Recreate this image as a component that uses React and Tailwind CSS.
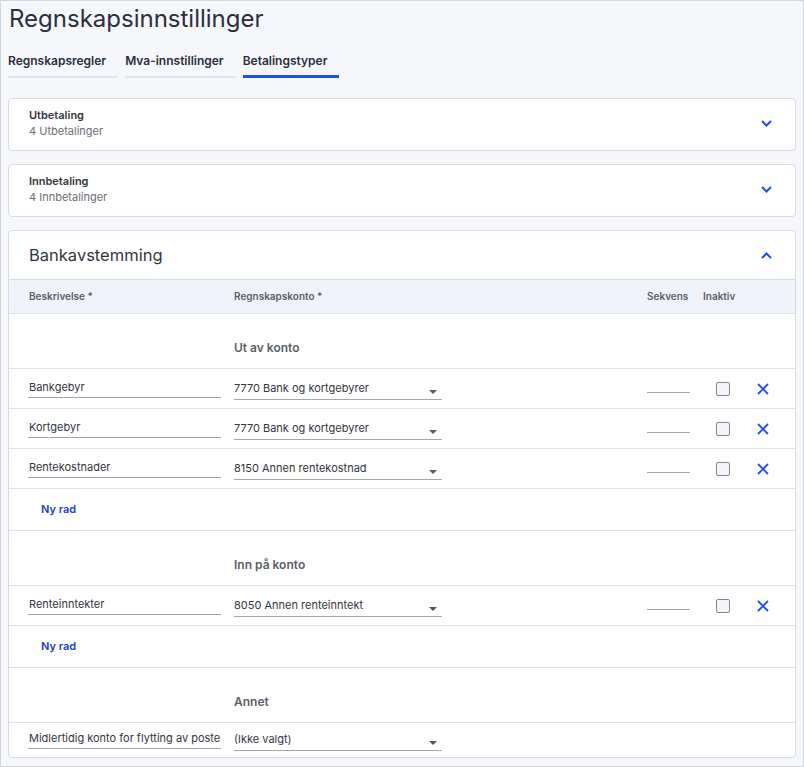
import { useState } from "react";

const blue = "#1d4ef0";

function Chevron({ up }) {
  return (
    <svg width="11" height="7" viewBox="0 0 11 7" fill="none">
      <path
        d={up ? "M1 6L5.5 1.5L10 6" : "M1 1L5.5 5.5L10 1"}
        stroke={blue}
        strokeWidth="2"
      />
    </svg>
  );
}

function CloseIcon() {
  return (
    <svg width="12" height="12" viewBox="0 0 12 12" fill="none">
      <path d="M1 1L11 11M11 1L1 11" stroke={blue} strokeWidth="1.8" />
    </svg>
  );
}

function SummaryCard({ title, subtitle }) {
  return (
    <div className="flex items-center justify-between rounded-[4px] border border-[#d7dae0] bg-white pl-[20px] pr-[23px] pt-2 pb-[11px]">
      <div className="text-[11px] leading-[16px]">
        <div className="font-semibold text-[#333640]">{title}</div>
        <div className="text-[#6b6e75]">{subtitle}</div>
      </div>
      <Chevron />
    </div>
  );
}

function TextInput({ value }) {
  return (
    <div className="-ml-px w-[193px] overflow-hidden whitespace-nowrap border-b border-[#a3a5a9] pl-px pb-[3px] text-[11px] leading-[14px] text-[#333640]">
      {value}
    </div>
  );
}

function SelectInput({ value }) {
  return (
    <div className="mt-[3px] flex w-[208px] items-end justify-between border-b border-[#a3a5a9] pb-[4px] text-[11px] leading-[14px] text-[#333640]">
      <span>{value}</span>
      <span className="mr-[5px] mb-px h-0 w-0 border-x-[4px] border-t-[4px] border-x-transparent border-t-[#555862]" />
    </div>
  );
}

function DataRow({ desc, account, last }) {
  const [checked, setChecked] = useState(false);
  const empty = account.startsWith("(");
  return (
    <div
      className={`grid grid-cols-[205px_413px_56px_40px_40px] items-center pl-[20px] ${
        last ? "h-[34px]" : "h-[40px] border-b border-[#dfe1e5]"
      }`}
    >
      <TextInput value={desc} />
      <SelectInput value={account} />
      {empty ? (
        <div />
      ) : (
        <div className="mt-[7px] w-[43px] border-b border-[#a3a5a9]" />
      )}
      {empty ? (
        <div />
      ) : (
        <div className="flex justify-center">
          <button
            onClick={() => setChecked(!checked)}
            className="h-[14px] w-[14px] rounded-[2px] border border-[#7f8591] bg-[#f3f5fa]"
          />
        </div>
      )}
      {empty ? (
        <div />
      ) : (
        <div className="flex justify-center">
          <CloseIcon />
        </div>
      )}
    </div>
  );
}

function GroupRow({ label }) {
  return (
    <div className="flex h-[55px] items-end border-b border-[#dfe1e5] pl-[225px] pb-[12px] text-[12px] font-semibold leading-[16px] text-[#5b5e66]">
      {label}
    </div>
  );
}

function NewRow() {
  return (
    <div className="flex h-[42px] items-center border-b border-[#dfe1e5] pl-[32px]">
      <button className="text-[11px] font-semibold text-[#1a3ccc]">Ny rad</button>
    </div>
  );
}

const outRows = [
  { desc: "Bankgebyr", account: "7770 Bank og kortgebyrer" },
  { desc: "Kortgebyr", account: "7770 Bank og kortgebyrer" },
  { desc: "Rentekostnader", account: "8150 Annen rentekostnad" },
];

export default function App() {
  const [tab, setTab] = useState("Betalingstyper");
  const tabs = ["Regnskapsregler", "Mva-innstillinger", "Betalingstyper"];

  return (
    <div
      className="min-h-[767px] border border-[#d3d6dc] bg-[#f5f7fb] px-[7px] pb-[8px]"
      style={{ fontFamily: "Inter, 'Noto Sans', sans-serif" }}
    >
      <h1 className="pt-[4px] pl-px text-[24px] leading-[28px] text-[#2b2f3d]">
        Regnskapsinnstillinger
      </h1>

      <div className="mt-[20px] flex items-end gap-[7px]">
        {tabs.map((t) => (
          <button
            key={t}
            onClick={() => setTab(t)}
            className={`pr-3 text-left text-[12px] font-semibold leading-[16px] text-[#2b2f3d] ${
              tab === t
                ? "border-b-[3px] border-[#1d4ef0] pb-[6px]"
                : "border-b-2 border-[#e0e5f2] pb-[7px]"
            }`}
          >
            {t}
          </button>
        ))}
      </div>

      <div className="mt-[20px] flex flex-col gap-[13px]">
        <SummaryCard title="Utbetaling" subtitle="4 Utbetalinger" />
        <SummaryCard title="Innbetaling" subtitle="4 Innbetalinger" />

        <div className="rounded-[4px] border border-[#d7dae0] bg-white">
          <div className="flex h-[49px] items-center justify-between border-b border-[#d7dae0] pl-[20px] pr-[23px]">
            <span className="text-[16.5px] text-[#333640]">Bankavstemming</span>
            <Chevron up />
          </div>

          <div className="grid h-[34px] grid-cols-[205px_413px_56px_50px] items-center border-b border-[#dfe1e5] bg-[#f0f3fb] pl-[20px] text-[10px] font-semibold text-[#5b5e66]">
            <span>Beskrivelse *</span>
            <span>Regnskapskonto *</span>
            <span>Sekvens</span>
            <span>Inaktiv</span>
          </div>

          <GroupRow label="Ut av konto" />
          {outRows.map((r) => (
            <DataRow key={r.desc} {...r} />
          ))}
          <NewRow />

          <GroupRow label="Inn på konto" />
          <DataRow desc="Renteinntekter" account="8050 Annen renteinntekt" />
          <NewRow />

          <GroupRow label="Annet" />
          <DataRow
            desc="Midlertidig konto for flytting av poster"
            account="(Ikke valgt)"
            last
          />
        </div>
      </div>
    </div>
  );
}
